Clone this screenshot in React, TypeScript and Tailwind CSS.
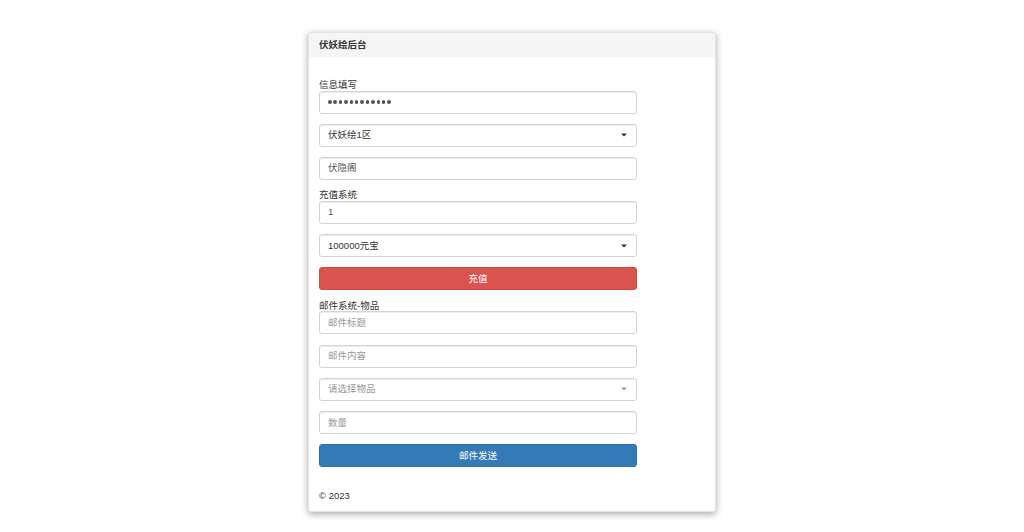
import React from "react";

const font = { fontFamily: '"Liberation Sans", "Noto Sans CJK SC", sans-serif' };

function Caret({ light }: { light?: boolean }) {
  return (
    <svg width="6" height="4" viewBox="0 0 6 4" className="shrink-0 mr-[1px]">
      <path d="M0 0.5 L6 0.5 L3 3.5 Z" fill={light ? "#999" : "#333"} />
    </svg>
  );
}

function Field({ children, placeholder }: { children?: React.ReactNode; placeholder?: string }) {
  return (
    <div className="h-[23px] mb-[10.3px] w-full rounded-[3px] border border-[#d3d3d3] bg-white shadow-[inset_0_1px_1px_rgba(0,0,0,0.075)] pl-[8px] pr-[8px] flex items-center text-[9.5px] text-[#555]">
      {placeholder ? <span className="text-[#999]">{placeholder}</span> : children}
    </div>
  );
}

function SelectField({ text, placeholder }: { text?: string; placeholder?: string }) {
  return (
    <div className="h-[23px] mb-[10.3px] w-full rounded-[3px] border border-[#d3d3d3] bg-white shadow-[inset_0_1px_1px_rgba(0,0,0,0.075)] pl-[8px] pr-[8px] flex items-center justify-between text-[9.5px] text-[#555]">
      {placeholder ? <span className="text-[#999]">{placeholder}</span> : <span className="text-[#333]">{text}</span>}
      <Caret light={!!placeholder} />
    </div>
  );
}

function Label({ children }: { children: React.ReactNode }) {
  return <div className="h-[10.5px] leading-[10.5px] text-[9.5px] text-[#333]">{children}</div>;
}

export default function App() {
  return (
    <div className="min-h-screen bg-white flex justify-center pt-[32px]" style={font}>
      <div className="w-[408px] h-[480px] rounded-[3px] bg-white border border-[#e3e3e3] shadow-[0_2px_7px_rgba(0,0,0,0.35)] overflow-hidden flex flex-col">
        <div className="h-[23.5px] bg-[#f5f5f5] px-[10px] flex items-center text-[9.5px] font-bold text-[#333]">
          伏妖绘后台
        </div>
        <div className="px-[10px] pt-[23.5px]">
          <div className="w-[318px]">
            <Label>信息填写</Label>
            <Field>
              <div className="flex gap-[1.9px]">
                {Array.from({ length: 12 }).map((_, i) => (
                  <span key={i} className="w-[3.5px] h-[3.5px] rounded-full bg-[#555]" />
                ))}
              </div>
            </Field>
            <SelectField text="伏妖绘1区" />
            <Field>伏隐阁</Field>
            <Label>充值系统</Label>
            <Field>1</Field>
            <SelectField text="100000元宝" />
            <div className="h-[23px] mb-[10.3px] w-full rounded-[3px] bg-[#d9534f] border border-[#d6463f] flex items-center justify-center text-[9.5px] text-white">
              充值
            </div>
            <Label>邮件系统-物品</Label>
            <Field placeholder="邮件标题" />
            <Field placeholder="邮件内容" />
            <SelectField placeholder="请选择物品" />
            <Field placeholder="数量" />
            <div className="h-[23px] w-full rounded-[3px] bg-[#337ab7] border border-[#3174ad] flex items-center justify-center text-[9.5px] text-white">
              邮件发送
            </div>
            <div className="mt-[22px] text-[9.5px] leading-[13.6px] text-[#333]">© 2023</div>
          </div>
        </div>
      </div>
    </div>
  );
}
